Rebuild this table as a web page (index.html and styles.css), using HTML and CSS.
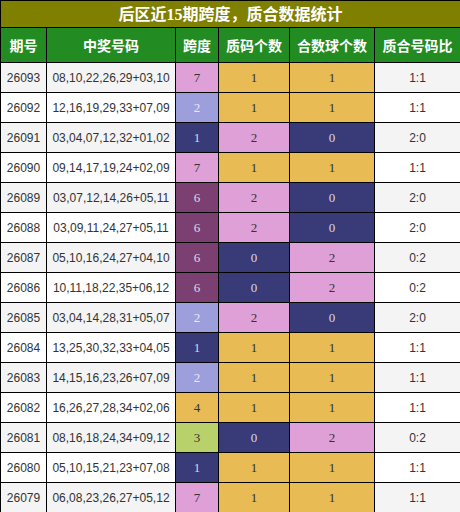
FILE: index.html
```html
<!DOCTYPE html>
<html lang="zh">
<head>
<meta charset="utf-8">
<title>后区近15期跨度，质合数据统计</title>
<link rel="stylesheet" href="styles.css">
</head>
<body>
<table class="stats">
  <colgroup>
    <col class="c-issue"><col class="c-balls"><col class="c-span"><col class="c-prime"><col class="c-comp"><col class="c-ratio">
  </colgroup>
  <thead>
    <tr class="title-row"><th colspan="6">后区近<span class="num">15</span>期跨度，质合数据统计</th></tr>
    <tr class="head-row"><th>期号</th><th>中奖号码</th><th>跨度</th><th>质码个数</th><th>合数球个数</th><th>质合号码比</th></tr>
  </thead>
  <tbody>
    <tr><td class="sans">26093</td><td class="sans">08,10,22,26,29+03,10</td><td class="pink">7</td><td class="gold">1</td><td class="gold">1</td><td class="sans">1:1</td></tr>
    <tr><td class="sans">26092</td><td class="sans">12,16,19,29,33+07,09</td><td class="peri">2</td><td class="gold">1</td><td class="gold">1</td><td class="sans">1:1</td></tr>
    <tr><td class="sans">26091</td><td class="sans">03,04,07,12,32+01,02</td><td class="navy">1</td><td class="pink">2</td><td class="navy">0</td><td class="sans">2:0</td></tr>
    <tr><td class="sans">26090</td><td class="sans">09,14,17,19,24+02,09</td><td class="pink">7</td><td class="gold">1</td><td class="gold">1</td><td class="sans">1:1</td></tr>
    <tr><td class="sans">26089</td><td class="sans">03,07,12,14,26+05,11</td><td class="plum">6</td><td class="pink">2</td><td class="navy">0</td><td class="sans">2:0</td></tr>
    <tr><td class="sans">26088</td><td class="sans">03,09,11,24,27+05,11</td><td class="plum">6</td><td class="pink">2</td><td class="navy">0</td><td class="sans">2:0</td></tr>
    <tr><td class="sans">26087</td><td class="sans">05,10,16,24,27+04,10</td><td class="plum">6</td><td class="navy">0</td><td class="pink">2</td><td class="sans">0:2</td></tr>
    <tr><td class="sans">26086</td><td class="sans">10,11,18,22,35+06,12</td><td class="plum">6</td><td class="navy">0</td><td class="pink">2</td><td class="sans">0:2</td></tr>
    <tr><td class="sans">26085</td><td class="sans">03,04,14,28,31+05,07</td><td class="peri">2</td><td class="pink">2</td><td class="navy">0</td><td class="sans">2:0</td></tr>
    <tr><td class="sans">26084</td><td class="sans">13,25,30,32,33+04,05</td><td class="navy">1</td><td class="gold">1</td><td class="gold">1</td><td class="sans">1:1</td></tr>
    <tr><td class="sans">26083</td><td class="sans">14,15,16,23,26+07,09</td><td class="peri">2</td><td class="gold">1</td><td class="gold">1</td><td class="sans">1:1</td></tr>
    <tr><td class="sans">26082</td><td class="sans">16,26,27,28,34+02,06</td><td class="gold">4</td><td class="gold">1</td><td class="gold">1</td><td class="sans">1:1</td></tr>
    <tr><td class="sans">26081</td><td class="sans">08,16,18,24,34+09,12</td><td class="lime">3</td><td class="navy">0</td><td class="pink">2</td><td class="sans">0:2</td></tr>
    <tr><td class="sans">26080</td><td class="sans">05,10,15,21,23+07,08</td><td class="navy">1</td><td class="gold">1</td><td class="gold">1</td><td class="sans">1:1</td></tr>
    <tr><td class="sans">26079</td><td class="sans">06,08,23,26,27+05,12</td><td class="pink">7</td><td class="gold">1</td><td class="gold">1</td><td class="sans">1:1</td></tr>
  </tbody>
</table>
</body>
</html>
```
FILE: styles.css
```css
html, body {
  margin: 0;
  padding: 0;
  background: #ffffff;
}

.stats {
  width: 460px;
  border-collapse: collapse;
  table-layout: fixed;
  font-family: "Liberation Serif", "Noto Sans CJK SC", serif;
  font-size: 13px;
  color: #333333;
}

.c-issue { width: 46px; }
.c-balls { width: 129px; }
.c-span { width: 43px; }
.c-prime { width: 71px; }
.c-comp { width: 85px; }
.c-ratio { width: 86px; }

.stats th,
.stats td {
  border: 1px solid #000000;
  padding: 0;
  text-align: center;
  vertical-align: middle;
}

.title-row th {
  height: 25px;
  background: #808000;
  color: #ffffff;
  font-family: "Noto Sans CJK SC", sans-serif;
  font-size: 16px;
  font-weight: bold;
  line-height: 25px;
}

.title-row .num {
  font-family: "Liberation Serif", serif;
}

.head-row th {
  height: 34px;
  background: #228b22;
  color: #ffffff;
  font-family: "Noto Sans CJK SC", sans-serif;
  font-size: 14px;
  font-weight: bold;
}

.stats td {
  height: 29px;
}

.stats tbody tr:nth-child(odd) td { background: #f4f4f4; }
.stats tbody tr:nth-child(even) td { background: #ffffff; }

.stats tbody tr td.sans {
  font-family: "Liberation Sans", "DejaVu Sans", sans-serif;
  font-size: 12px;
  color: #333333;
}

.stats tbody tr td.pink { background: #dfa0d8; color: #333333; }
.stats tbody tr td.gold { background: #e8bb55; color: #333333; }
.stats tbody tr td.peri { background: #9c9fdc; color: #e8e8f4; }
.stats tbody tr td.navy { background: #393a78; color: #d8d8e8; }
.stats tbody tr td.plum { background: #7b3f72; color: #e4d8e4; }
.stats tbody tr td.lime { background: #b9d16b; color: #333333; }
```
